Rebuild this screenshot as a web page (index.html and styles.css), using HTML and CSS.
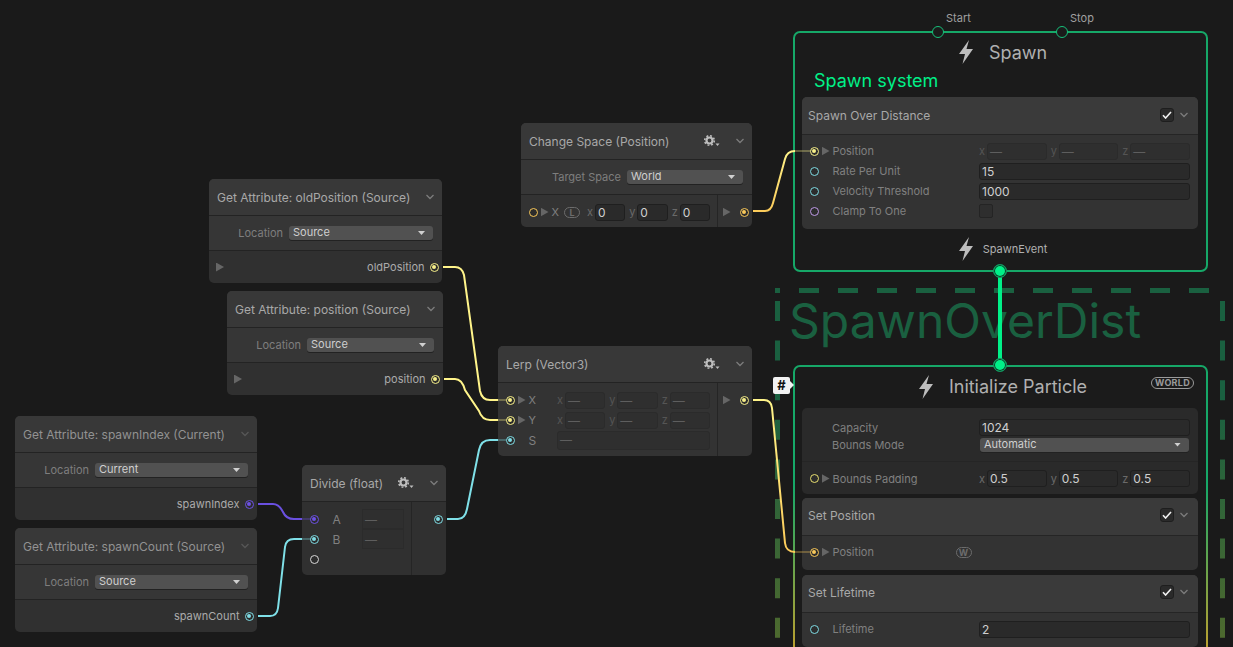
FILE: index.html
```html
<!DOCTYPE html>
<html lang="en">
<head>
<meta charset="utf-8">
<title>VFX Graph</title>
<link rel="stylesheet" href="styles.css">
</head>
<body>
<svg class="defs" width="0" height="0" aria-hidden="true">
  <defs>
    <symbol id="bolt" viewBox="0 0 14 24"><path d="M10 0 L0 14 H6 L3.5 24 L14 9 H7.5 Z" fill="#bdbdbd"/></symbol>
    <symbol id="gear" viewBox="0 0 16 12">
      <circle cx="5.5" cy="5.5" r="3" fill="none" stroke="#bdbdbd" stroke-width="2.2"/>
      <circle cx="5.5" cy="5.5" r="4.8" fill="none" stroke="#bdbdbd" stroke-width="1.6" stroke-dasharray="1.9 1.87"/>
      <path d="M11.5 8.5 H15.5 L13.5 11 Z" fill="#bdbdbd"/>
    </symbol>
    <symbol id="chev" viewBox="0 0 10 6"><path d="M1.5 1 L5 4.5 L8.5 1" fill="none" stroke="#7c7c7c" stroke-width="1.3"/></symbol>
    <symbol id="check" viewBox="0 0 10 8"><path d="M1 4.2 L3.6 7 L9 1" fill="none" stroke="#f0f0f0" stroke-width="1.6"/></symbol>
    <linearGradient id="dash" gradientUnits="userSpaceOnUse" x1="0" y1="400" x2="0" y2="647">
      <stop offset="0" stop-color="#1a6040"/><stop offset="1" stop-color="#4f6a2e"/>
    </linearGradient>
  </defs>
</svg>

<main class="canvas">
  <svg class="group-lines" width="1233" height="647" aria-hidden="true">
    <path class="dash-h" d="M799 290.5 H1210"/>
    <path class="dash-v" d="M777.5 301 V647"/>
    <path class="dash-v" d="M1222.5 301 V647"/>
    <path class="dash-c" d="M777.5 293 V290.5 H780"/>
  </svg>
  <div class="group-title">SpawnOverDist</div>

  <!-- Get Attribute nodes -->
  <section class="node n-old">
    <header class="nhead"><span class="ntitle">Get Attribute: oldPosition (Source)</span><svg class="chev"><use href="#chev"/></svg></header>
    <div class="setting"><span class="slabel">Location</span><span class="drop d-old">Source</span></div>
    <div class="outrow"><i class="tri"></i><span class="oname">oldPosition</span><span class="port vec on"></span></div>
  </section>

  <section class="node n-pos">
    <header class="nhead"><span class="ntitle">Get Attribute: position (Source)</span><svg class="chev"><use href="#chev"/></svg></header>
    <div class="setting"><span class="slabel">Location</span><span class="drop d-pos">Source</span></div>
    <div class="outrow"><i class="tri"></i><span class="oname">position</span><span class="port vec on"></span></div>
  </section>

  <section class="node n-idx">
    <header class="nhead"><span class="ntitle dim">Get Attribute: spawnIndex (Current)</span><svg class="chev faint"><use href="#chev"/></svg></header>
    <div class="setting"><span class="slabel">Location</span><span class="drop d-wide">Current</span></div>
    <div class="outrow"><span class="oname">spawnIndex</span><span class="port uint on"></span></div>
  </section>

  <section class="node n-cnt">
    <header class="nhead"><span class="ntitle dim">Get Attribute: spawnCount (Source)</span><svg class="chev faint"><use href="#chev"/></svg></header>
    <div class="setting"><span class="slabel">Location</span><span class="drop d-wide">Source</span></div>
    <div class="outrow"><span class="oname">spawnCount</span><span class="port flt on"></span></div>
  </section>

  <!-- Divide -->
  <section class="node n-div">
    <header class="nhead"><span class="ntitle">Divide (float)</span><svg class="gear"><use href="#gear"/></svg><svg class="chev"><use href="#chev"/></svg></header>
    <div class="cols">
      <div class="incol">
        <div class="row"><span class="port uint on"></span><span class="lbl abc">A</span><span class="field off f-div">—</span></div>
        <div class="row"><span class="port flt on"></span><span class="lbl abc">B</span><span class="field off f-div">—</span></div>
        <div class="row"><span class="port wht"></span></div>
      </div>
      <div class="outcol"><div class="row end"><span class="port flt on"></span></div></div>
    </div>
  </section>

  <!-- Lerp -->
  <section class="node n-lerp">
    <header class="nhead"><span class="ntitle">Lerp (Vector3)</span><svg class="gear"><use href="#gear"/></svg><svg class="chev"><use href="#chev"/></svg></header>
    <div class="cols">
      <div class="incol">
        <div class="row"><span class="port vec on"></span><i class="tri t-in"></i><span class="lbl">X</span>
          <div class="vec3 v-lerp off"><span class="vl">x</span><span class="field off">—</span><span class="vl">y</span><span class="field off">—</span><span class="vl">z</span><span class="field off">—</span></div></div>
        <div class="row"><span class="port vec on"></span><i class="tri t-in"></i><span class="lbl">Y</span>
          <div class="vec3 v-lerp off"><span class="vl">x</span><span class="field off">—</span><span class="vl">y</span><span class="field off">—</span><span class="vl">z</span><span class="field off">—</span></div></div>
        <div class="row"><span class="port flt on"></span><span class="lbl s-lbl">S</span><span class="field off f-s">—</span></div>
      </div>
      <div class="outcol"><div class="row end"><i class="tri"></i><span class="port vec on"></span></div></div>
    </div>
  </section>

  <!-- Change Space -->
  <section class="node n-chg">
    <header class="nhead"><span class="ntitle">Change Space (Position)</span><svg class="gear"><use href="#gear"/></svg><svg class="chev"><use href="#chev"/></svg></header>
    <div class="setting"><span class="slabel">Target Space</span><span class="drop d-chg">World</span></div>
    <div class="cols c-chg">
      <div class="incol">
        <div class="row"><span class="port pos"></span><i class="tri t-in"></i><span class="lbl">X</span><span class="pill p-l">L</span>
          <div class="vec3 v-chg"><span class="vl">x</span><span class="field">0</span><span class="vl">y</span><span class="field">0</span><span class="vl">z</span><span class="field">0</span></div></div>
      </div>
      <div class="outcol"><div class="row end"><i class="tri"></i><span class="port pos on"></span></div></div>
    </div>
  </section>

  <!-- Spawn context -->
  <section class="ctx c-spawn">
    <span class="flow fl-start"></span><span class="flabel fll-start">Start</span>
    <span class="flow fl-stop"></span><span class="flabel fll-stop">Stop</span>
    <span class="flow on fl-out"></span>
    <header class="ctitle"><svg class="bolt"><use href="#bolt"/></svg><span>Spawn</span></header>
    <div class="comment">Spawn system</div>
    <div class="block">
      <header class="bhead"><span>Spawn Over Distance</span><span class="chk"><svg><use href="#check"/></svg></span><svg class="chev"><use href="#chev"/></svg></header>
      <div class="bbody">
        <div class="row"><span class="port vec on"></span><i class="tri t-in"></i><span class="lbl">Position</span>
          <div class="vec3 v-ctx off"><span class="vl">x</span><span class="field off">—</span><span class="vl">y</span><span class="field off">—</span><span class="vl">z</span><span class="field off">—</span></div></div>
        <div class="row"><span class="port flt"></span><span class="lbl nt">Rate Per Unit</span><span class="field f-full">15</span></div>
        <div class="row"><span class="port flt"></span><span class="lbl nt">Velocity Threshold</span><span class="field f-full">1000</span></div>
        <div class="row"><span class="port boo"></span><span class="lbl nt">Clamp To One</span><span class="box"></span></div>
      </div>
    </div>
    <footer class="cfoot"><svg class="bolt"><use href="#bolt"/></svg><span>SpawnEvent</span></footer>
  </section>

  <!-- Initialize context -->
  <section class="ctx c-init">
    <span class="flow on fl-in"></span>
    <span class="hash">#</span>
    <span class="world">WORLD</span>
    <header class="ctitle"><svg class="bolt"><use href="#bolt"/></svg><span>Initialize Particle</span></header>
    <div class="settings-block">
      <div class="cap">
        <div class="srow"><span class="lbl nt2">Capacity</span><span class="field f-full">1024</span></div>
        <div class="srow"><span class="lbl nt2">Bounds Mode</span><span class="drop d-auto">Automatic</span></div>
      </div>
      <div class="row r-pad"><span class="port pad"></span><i class="tri t-in"></i><span class="lbl">Bounds Padding</span>
        <div class="vec3 v-ctx"><span class="vl">x</span><span class="field">0.5</span><span class="vl">y</span><span class="field">0.5</span><span class="vl">z</span><span class="field">0.5</span></div></div>
    </div>
    <div class="block b-setpos">
      <header class="bhead"><span>Set Position</span><span class="chk"><svg><use href="#check"/></svg></span><svg class="chev"><use href="#chev"/></svg></header>
      <div class="bbody">
        <div class="row"><span class="port pos on"></span><i class="tri t-in"></i><span class="lbl l-w">Position</span><span class="pill p-w">W</span></div>
      </div>
    </div>
    <div class="block b-life">
      <header class="bhead"><span>Set Lifetime</span><span class="chk"><svg><use href="#check"/></svg></span><svg class="chev"><use href="#chev"/></svg></header>
      <div class="bbody">
        <div class="row"><span class="port flt"></span><span class="lbl nt">Lifetime</span><span class="field f-full">2</span></div>
      </div>
    </div>
  </section>

  <!-- Edges -->
  <svg class="wires" width="1233" height="647" aria-hidden="true">
    <path class="stub" stroke="#fff48a" d="M498 400 H510 M498 420 H510"/>
    <path class="stub" stroke="#7fe0e8" d="M498 440 H510"/>
    <path class="stub" stroke="#6a50e0" d="M302 519 H314"/>
    <path class="stub" stroke="#7fe0e8" d="M302 539 H314"/>
    <path class="stub" stroke="#fff48a" d="M795 151 H814"/>
    <path class="stub" stroke="#fbcb5a" d="M795 552 H814"/>
    <path class="wire" stroke="#fff48a" d="M443 267 H455 Q462 267 464 275 L480 391 Q482 400 490 400 H498"/>
    <path class="wire" stroke="#fff48a" d="M444 379 H455 Q462 379 465 390 L479 411 Q482 420 490 420 H498"/>
    <path class="wire" stroke="#7fe0e8" d="M447 519 H458 Q465 519 467 509 L479 450 Q481 440 490 440 H498"/>
    <path class="wire" stroke="#6a50e0" d="M258 504 H273 Q279 504 283 512 Q286 519 294 519 H302"/>
    <path class="wire" stroke="#7fe0e8" d="M258 616 H270 Q277 616 278 608 L285 547 Q286 539 294 539 H302"/>
    <path class="wire wire-g" d="M753 400 H764 Q771 400 772 408 L785 543 Q786 552 795 552"/>
    <path class="wire wire-p" d="M753 211 H765 Q771 211 773 203 L785 159 Q787 151 795 151"/>
    <path class="link" d="M1000 271 V365"/>
    <linearGradient id="gp" gradientUnits="userSpaceOnUse" x1="0" y1="151" x2="0" y2="211"><stop offset="0" stop-color="#fff48a"/><stop offset="1" stop-color="#fbcb5a"/></linearGradient>
    <linearGradient id="gg" gradientUnits="userSpaceOnUse" x1="0" y1="400" x2="0" y2="552"><stop offset="0" stop-color="#fff48a"/><stop offset="1" stop-color="#fbcb5a"/></linearGradient>
  </svg>
</main>
</body>
</html>
```
FILE: styles.css
```css
* { box-sizing: border-box; }
html, body { margin: 0; padding: 0; }
body { background: #1a1a1a; overflow: hidden; font-family: Inter, "Liberation Sans", sans-serif; font-size: 11px; color: #8f8f8f; }
.defs { position: absolute; }
.canvas { position: relative; width: 1233px; height: 647px; overflow: hidden; background: #1a1a1a; }

/* group */
.group-lines { position: absolute; left: 0; top: 0; }
.dash-h { fill: none; stroke: #1a6040; stroke-width: 5; stroke-dasharray: 20 19; }
.dash-v { fill: none; stroke: url(#dash); stroke-width: 5; stroke-dasharray: 20 19.6; }
.dash-c { fill: none; stroke: #1a6040; stroke-width: 5; }
.group-title { position: absolute; left: 789px; top: 292px; font-size: 48px; line-height: 58px; color: #1a6040; white-space: nowrap; }

/* nodes */
.node { position: absolute; border-radius: 5px; background: #303030; display: flex; flex-direction: column; }
.n-old { left: 209px; top: 179px; width: 233px; height: 104px; }
.n-pos { left: 227px; top: 291px; width: 216px; height: 104px; }
.n-idx { left: 15px; top: 416px; width: 242px; height: 104px; }
.n-cnt { left: 15px; top: 528px; width: 242px; height: 104px; }
.n-div { left: 302px; top: 465px; width: 144px; height: 110px; }
.n-lerp { left: 498px; top: 346px; width: 254px; height: 110px; background: #333; }
.n-chg { left: 521px; top: 123px; width: 231px; height: 104px; background: #333; }

.nhead { height: 37px; flex: none; display: flex; align-items: center; padding: 0 6px 0 8px; background: #383838; border-radius: 5px 5px 0 0; border-bottom: 1px solid #232323; }
.ntitle { font-size: 12px; color: #a8a8a8; white-space: nowrap; flex: 1; }
.ntitle.dim { color: #929292; }
.chev { width: 10px; height: 6px; flex: none; margin-left: auto; margin-right: 1px; }
.chev.faint { opacity: .45; }
.gear { width: 16px; height: 12px; flex: none; margin-right: 15px; }

.setting { height: 35px; flex: none; display: flex; align-items: center; justify-content: flex-end; padding-right: 9px; background: #363636; border-bottom: 1px solid #232323; }
.slabel { color: #7e7e7e; margin-right: 6px; white-space: nowrap; }
.drop { position: relative; display: block; height: 14px; line-height: 13px; padding-left: 4px; border-radius: 3px; background: #515151; color: #cfcfcf; font-size: 11px; box-shadow: 0 1px 0 #222; }
.drop::after { content: ""; position: absolute; right: 8px; top: 5px; width: 7px; height: 4px; background: #d0d0d0; clip-path: polygon(0 0, 100% 0, 50% 100%); }
.d-old { width: 144px; }
.d-pos { width: 127px; }
.d-wide { width: 153px; }
.d-chg { width: 116px; }
.d-auto { width: 209px; margin-left: auto; margin-right: 9px; height: 14px; }

.outrow { flex: 1; display: flex; align-items: center; justify-content: flex-end; padding: 0 3.5px 0 7px; }
.outrow .port { margin-left: 5px; }
.outrow .tri { margin-right: auto; }
.oname { color: #ababab; white-space: nowrap; }

.cols { flex: 1; display: flex; min-width: 0; }
.incol { flex: 1; min-width: 0; padding: 7px 7px 0 8px; border-right: 1px solid #252525; }
.outcol { width: 34px; flex: none; padding: 7px 3px 0 0; }

.row { height: 20px; display: flex; align-items: center; }
.row.end { justify-content: flex-end; }
.row.end .tri { margin-right: 10px; }

.port { position: relative; z-index: 2; flex: none; width: 9px; height: 9px; margin-left: -.5px; border-radius: 50%; border: 1.5px solid #999; background: #2c2c2c; }
.port.on::after { content: ""; position: absolute; left: 1px; top: 1px; width: 4px; height: 4px; border-radius: 50%; background: currentColor; }
.vec { border-color: #f7f08a; color: #f7f08a; }
.pos { border-color: #f8c85a; color: #f8c85a; }
.pad { border-color: #e8df70; }
.flt { border-color: #7fdce4; color: #7fdce4; }
.uint { border-color: #6d52e6; color: #6d52e6; }
.boo { border-color: #c09ae8; }
.wht { border-color: #d8d8d8; }

.tri { display: block; flex: none; width: 8px; height: 9px; background: #666; clip-path: polygon(0 0, 100% 50%, 0 100%); }
.t-in { margin-left: 3px; }

.lbl { color: #808080; white-space: nowrap; margin-left: 3px; font-size: 11px; }
.lbl.nt { margin-left: 14px; }
.lbl.abc { margin-left: 14px; font-size: 12px; width: 30px; }
.s-lbl { margin-left: 14px; font-size: 12px; }

.field { display: block; flex: 1; min-width: 0; height: 17px; line-height: 16px; padding-left: 2px; border-radius: 3px; background: #2a2a2a; border: 1px solid #1f1f1f; color: #cfcfcf; font-size: 12px; white-space: nowrap; overflow: hidden; }
.field.off { background: #2f2f2f; border-color: #2b2b2b; color: #5e5e5e; }
.f-div { flex: none; width: 42px; height: 20px; line-height: 19px; border-radius: 0; }
.f-s { flex: none; margin-left: auto; width: 153px; height: 19px; }
.f-full { flex: none; width: 211px; margin-left: auto; margin-right: 8px; }

.vec3 { margin-left: auto; display: flex; align-items: center; flex: none; }
.vl { flex: none; width: 8px; color: #6a6a6a; font-size: 11px; text-align: left; margin-left: 4px; }
.vl:first-child { margin-left: 0; }
.vec3.off .vl { color: #555; }
.v-lerp { width: 153px; }
.v-ctx { width: 211px; margin-right: 8px; }
.v-chg { width: 123px; }

.pill { display: block; flex: none; border: 1px solid #6c6c6c; border-radius: 6px; height: 11px; line-height: 9px; text-align: center; color: #6c6c6c; font-size: 9px; font-weight: 700; }
.p-l { width: 16px; margin-left: 5px; }
.p-w { width: 16px; }
.l-w { width: 123px; }

/* contexts */
.ctx { position: absolute; border: 2px solid transparent; border-radius: 7px; padding: 0 8px 0 7px; display: flex; flex-direction: column; }
.c-spawn { left: 793px; top: 31px; width: 415px; height: 241px; background: linear-gradient(#1b1b1b, #1b1b1b) padding-box, linear-gradient(#16a868, #16a868) border-box; }
.c-init { left: 793px; top: 365px; width: 415px; height: 400px; border-bottom: 0; background: linear-gradient(#1b1b1b, #1b1b1b) padding-box, linear-gradient(#16a868 0, #16a868 120px, #b9a030 282px) border-box; }

.ctitle { flex: none; height: 38px; display: flex; align-items: center; justify-content: center; padding-left: 6px; gap: 16px; font-size: 18px; color: #b0b0b0; }
.c-init .ctitle { height: 41px; padding-bottom: 2px; }
.bolt { width: 14px; height: 24px; flex: none; }
.comment { flex: none; height: 20px; line-height: 20px; margin: 0 0 6px 12px; color: #00f088; font-size: 18px; }
.block { flex: none; background: #333; border-radius: 5px; }
.bhead { height: 38px; display: flex; align-items: center; padding: 0 8px 1px 6px; background: #3a3a3a; border-radius: 5px 5px 0 0; border-bottom: 1px solid #252525; font-size: 12px; color: #a8a8a8; }
.b-setpos .bhead, .b-life .bhead { padding-bottom: 3px; }
.chk { margin-left: auto; width: 14px; height: 14px; border-radius: 3px; background: #2a2a2a; border: 1px solid #1e1e1e; display: flex; align-items: center; justify-content: center; }
.chk svg { width: 10px; height: 8px; }
.bhead .chev { margin-left: 5px; margin-right: 1px; }
.bbody { padding: 6px 0 8px 8px; }
.box { display: block; width: 14px; height: 14px; border-radius: 2px; background: #2e2e2e; border: 1px solid #242424; margin-left: auto; margin-right: 205px; }
.cfoot { flex: 1; display: flex; align-items: center; justify-content: center; padding-left: 6px; gap: 10px; font-size: 11px; color: #b0b0b0; padding-bottom: 2px; }

.settings-block { flex: none; height: 86px; border-radius: 5px; background: #2a2a2a; display: flex; flex-direction: column; }
.cap { height: 54px; padding-top: 11px; border-bottom: 1px solid #252525; flex: none; }
.srow { height: 17px; display: flex; align-items: center; padding-left: 30px; }
.lbl.nt2 { margin-left: 0; }
.r-pad { flex: 1; height: auto; padding: 1px 0 0 8px; }
.b-setpos { margin-top: 4px; height: 72px; }
.b-life { margin-top: 5px; }

/* overlays */
.flow { position: absolute; z-index: 3; width: 12px; height: 12px; border-radius: 50%; border: 1.5px solid #16c07a; background: #1b1b1b; transform: translate(-50%, -50%); }
.flow.on { width: 14px; height: 14px; background: #00f088; border-color: #17905f; box-shadow: inset 0 0 0 1px #0c3a26; }
.fl-start { left: 143px; top: -1px; }
.fl-stop { left: 267px; top: -1px; }
.fl-out { left: 205px; top: 238px; }
.fl-in { left: 205px; top: -2px; }
.flabel { position: absolute; top: -22px; font-size: 11px; line-height: 14px; color: #a0a0a0; }
.fll-start { left: 151px; }
.fll-stop { left: 275px; }
.hash { position: absolute; z-index: 3; left: -22px; top: 10px; width: 17px; height: 17px; border-radius: 2px; background: #f2f2f2; color: #111; font-weight: 700; font-size: 13px; line-height: 17px; text-align: center; }
.hash::after { content: ""; position: absolute; left: 17px; top: 4px; width: 4px; height: 8px; background: #f2f2f2; clip-path: polygon(0 0, 100% 50%, 0 100%); }
.world { position: absolute; left: 356px; top: 10px; width: 43px; height: 12px; border: 1px solid #9a9a9a; border-radius: 6px; color: #9a9a9a; font-size: 9px; font-weight: 700; line-height: 10px; text-align: center; letter-spacing: .3px; }

.wires { position: absolute; left: 0; top: 0; z-index: 1; pointer-events: none; }
.wire { fill: none; stroke-width: 2; }
.wire-g { stroke: url(#gg); }
.wire-p { stroke: url(#gp); }
.stub { fill: none; stroke-width: 2; opacity: .3; }
.link { fill: none; stroke: #00f088; stroke-width: 4; }
```
